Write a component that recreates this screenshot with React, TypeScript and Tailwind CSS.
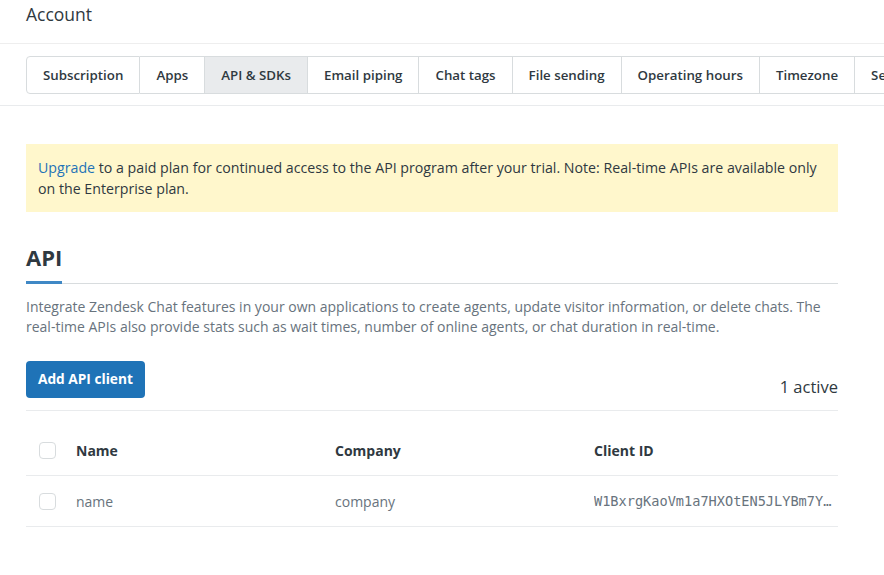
import React from "react";

const tabs = [
  "Subscription",
  "Apps",
  "API & SDKs",
  "Email piping",
  "Chat tags",
  "File sending",
  "Operating hours",
  "Timezone",
  "Security",
];

function Check() {
  return <span className="block w-[17px] h-[17px] rounded-[4px] border border-[#d8dcde] bg-white" />;
}

export default function App() {
  return (
    <div className="w-[884px] h-[575px] overflow-hidden bg-white text-[#2f3941]" style={{ fontFamily: '"Open Sans", "Noto Sans", sans-serif' }}>
      <div className="h-[44px] border-b border-[#eeeeee] px-[26px] flex items-start pt-[3px]">
        <h1 className="text-[17.5px] text-[#2f3941] leading-[22px]">Account</h1>
      </div>
      <div className="h-[62px] border-b border-[#e9ebed] pl-[26px] pt-[12px] overflow-hidden">
        <div className="flex h-[38px] w-max">
          {tabs.map((t, i) => (
            <div
              key={t}
              className={
                "px-[16px] flex items-center pt-[2px] text-[13.3px] font-semibold whitespace-nowrap border-y border-r border-[#d8dcde] " +
                (i === 0 ? "border-l rounded-l-[4px] " : "") +
                (t === "API & SDKs" ? "bg-[#e9ebed]" : "bg-white")
              }
            >
              {t}
            </div>
          ))}
        </div>
      </div>
      <div className="px-[26px]">
        <div className="w-[812px]">
          <div className="mt-[38px] bg-[#fff7cc] px-[12px] py-[13px] text-[14.2px] leading-[21px] text-[#2f3941]">
            <span className="text-[#1f73b7]">Upgrade</span> to a paid plan for continued access to the API program after your trial. Note: Real-time APIs are available only on the Enterprise plan.
          </div>
          <h2 className="mt-[31px] text-[22px] font-bold leading-[28px] text-[#2f3941]">API</h2>
          <div className="mt-[10px] h-[3px] relative">
            <div className="absolute left-0 right-0 bottom-0 h-px bg-[#d8dcde]" />
            <div className="absolute left-0 bottom-0 w-[36px] h-[3px] bg-[#3f88c5]" />
          </div>
          <p className="mt-[13px] text-[14px] leading-[19.5px] text-[#68737d]">
            Integrate Zendesk Chat features in your own applications to create agents, update visitor information, or delete chats. The real-time APIs also provide stats such as wait times, number of online agents, or chat duration in real-time.
          </p>
          <div className="mt-[25px] flex items-end justify-between">
            <button className="h-[37px] px-[12px] rounded-[4px] bg-[#1f73b7] text-white text-[13.7px] font-bold">Add API client</button>
            <span className="text-[16.5px] text-[#2f3941] leading-[20px] pb-[1px]">1 active</span>
          </div>
          <div className="mt-[12px] border-t border-[#e9ebed]">
            <div className="grid grid-cols-[50px_259px_259px_1fr] h-[65px] items-center border-b border-[#e9ebed] pt-[14px] text-[14px] font-bold text-[#2f3941]">
              <div className="pl-[13px]"><Check /></div>
              <div>Name</div>
              <div>Company</div>
              <div>Client ID</div>
            </div>
            <div className="grid grid-cols-[50px_259px_259px_1fr] h-[51px] items-center border-b border-[#e9ebed] text-[14px] text-[#68737d]">
              <div className="pl-[13px]"><Check /></div>
              <div>name</div>
              <div>company</div>
              <div className="truncate text-[13.6px] pr-[2px]" style={{ fontFamily: '"DejaVu Sans Mono", monospace' }}>W1BxrgKaoVm1a7HXOtEN5JLYBm7YxQ2s</div>
            </div>
          </div>
        </div>
      </div>
    </div>
  );
}
